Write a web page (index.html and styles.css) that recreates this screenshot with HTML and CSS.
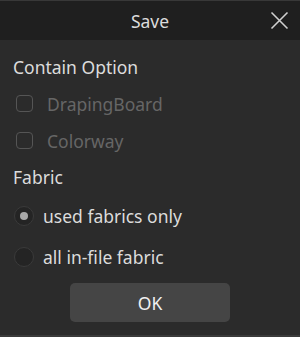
FILE: index.html
```html
<!DOCTYPE html>
<html lang="en">
<head>
    <meta charset="UTF-8">
    <meta name="viewport" content="width=device-width, initial-scale=1.0">
    <title>Save</title>
    <link rel="stylesheet" href="styles.css">
</head>
<body>
    <div class="dialog">
        <div class="title-bar">
            <span class="title">Save</span>
            <button class="close-button" aria-label="Close">
                <svg width="19" height="19" viewBox="0 0 19 19">
                    <path d="M1.5 1.5 L17.5 17.5 M17.5 1.5 L1.5 17.5" stroke="#d0d0d0" stroke-width="1.6" fill="none"/>
                </svg>
            </button>
        </div>

        <div class="content">
            <div class="section-title">Contain Option</div>
            <label class="option disabled">
                <span class="checkbox"></span>
                <span>DrapingBoard</span>
            </label>
            <label class="option disabled">
                <span class="checkbox"></span>
                <span>Colorway</span>
            </label>

            <div class="section-title">Fabric</div>
            <label class="option radio-option">
                <span class="radio checked"></span>
                <span>used fabrics only</span>
            </label>
            <label class="option radio-option">
                <span class="radio"></span>
                <span>all in-file fabric</span>
            </label>

            <div class="actions">
                <button class="ok-button">OK</button>
            </div>
        </div>
    </div>
</body>
</html>
```

FILE: styles.css
```css
/* Base Styles */
body {
    margin: 0;
    padding: 0;
    background-color: #2b2b2b;
    font-family: "Noto Sans", "Open Sans", sans-serif;
    color: #dcdcdc;
}

.dialog {
    width: 300px;
    height: 337px;
    box-sizing: border-box;
    border-top: 1px solid #383838;
    border-bottom: 2px solid #3a3a3a;
    background-color: #2b2b2b;
    display: flex;
    flex-direction: column;
}

.title-bar {
    height: 39px;
    background-color: #1f1f1f;
    display: flex;
    align-items: center;
    justify-content: center;
    position: relative;
}

.title {
    font-size: 17.5px;
    color: #dcdcdc;
}

.close-button {
    position: absolute;
    right: 11px;
    top: 10px;
    width: 19px;
    height: 19px;
    padding: 0;
    border: none;
    background: none;
    display: flex;
}

.content {
    padding: 9px 0 0 13px;
    display: flex;
    flex-direction: column;
}

.section-title {
    font-size: 17.5px;
    height: 36px;
    display: flex;
    align-items: center;
}

.option {
    display: flex;
    align-items: center;
    gap: 14px;
    height: 37px;
    padding-left: 3px;
    font-size: 17.5px;
}

.option.disabled {
    color: #666666;
}

.radio-option {
    height: 41px;
    gap: 9px;
    padding-left: 1px;
}

.checkbox {
    width: 15px;
    height: 15px;
    border: 1px solid #555555;
    border-radius: 4px;
}

.radio {
    width: 18px;
    height: 18px;
    border: 1px solid #3a3a3a;
    border-radius: 50%;
    background-color: #242424;
    display: flex;
    align-items: center;
    justify-content: center;
}

.radio.checked::after {
    content: "";
    width: 8px;
    height: 8px;
    border-radius: 50%;
    background-color: #a8a8a8;
}

.actions {
    display: flex;
    justify-content: center;
    padding-right: 13px;
    margin-top: 6px;
}

.ok-button {
    width: 160px;
    height: 39px;
    border: none;
    border-radius: 5px;
    background-color: #454545;
    color: #f0f0f0;
    font-family: "Noto Sans", "Open Sans", sans-serif;
    font-size: 17.5px;
}
```
